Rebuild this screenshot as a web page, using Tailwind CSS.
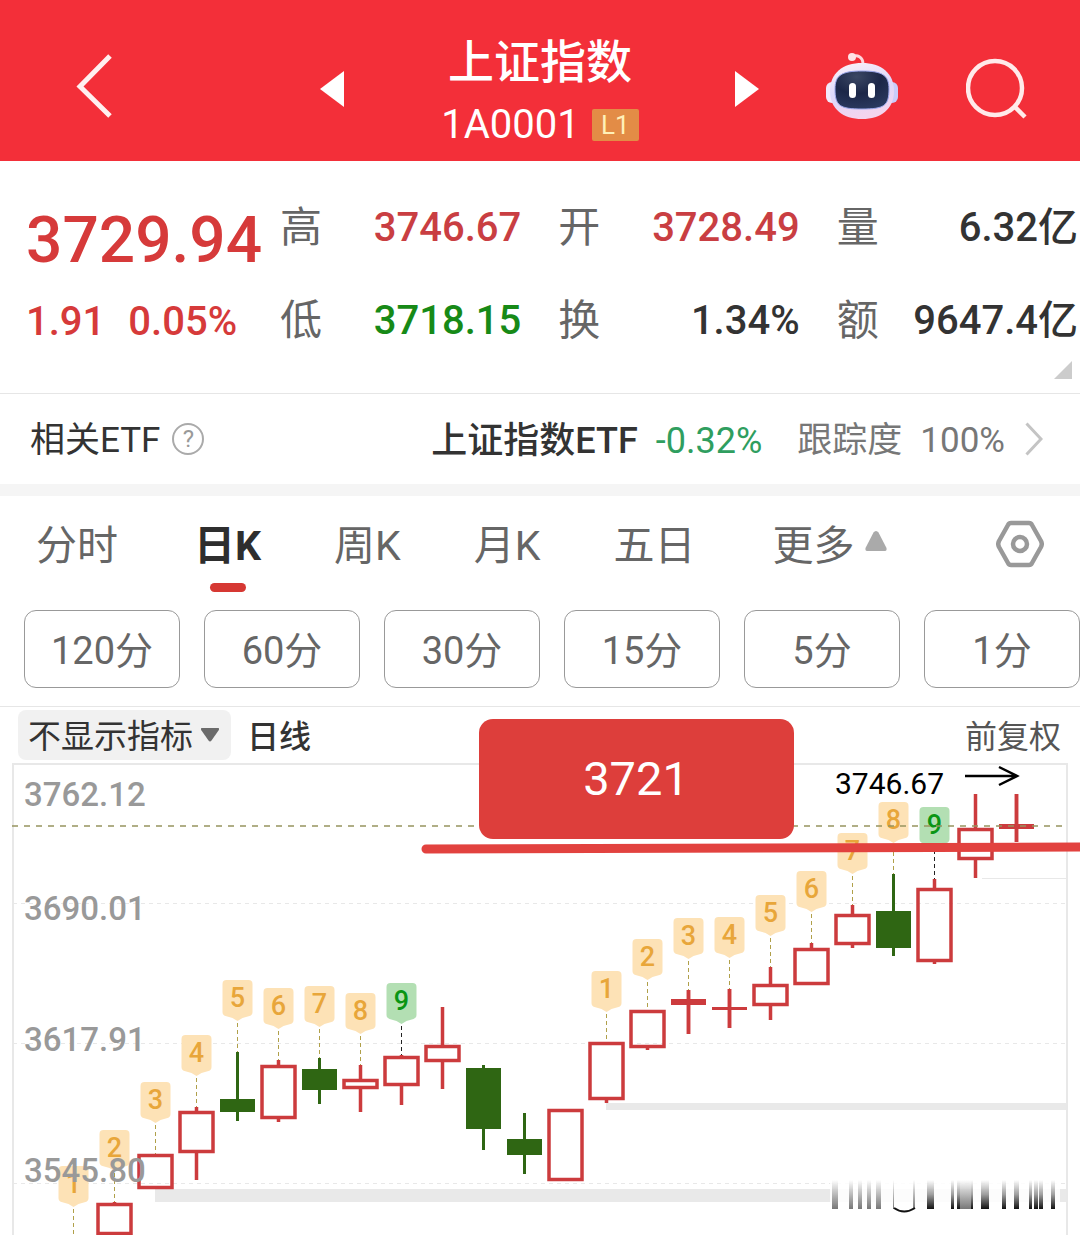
<!DOCTYPE html>
<html lang="zh-CN">
<head>
<meta charset="utf-8">
<meta name="viewport" content="width=device-width, initial-scale=1">
<title>上证指数 1A0001</title>
<script src="https://cdn.jsdelivr.net/npm/@tailwindcss/browser@4"></script>
</head>
<body class="bg-white font-[Roboto,'Noto_Sans_CJK_SC',sans-serif] text-[#333] overflow-x-hidden">

<header class="grid grid-cols-[1fr_auto_1fr] bg-[#f32f39] text-white h-[161px]">
  <div class="flex items-start justify-between pl-[76px] pr-[97px]">
    <button type="button" aria-label="返回" class="mt-[54px]">
      <svg class="block w-[37px] h-[64px]" viewBox="0 0 37 64" fill="none" stroke="#fff0f0" stroke-width="5"><path d="M34 2 4 32.500 34 62"/></svg>
    </button>
    <button type="button" aria-label="上一个" class="mt-[71px]">
      <svg class="block w-[24px] h-[36px]" viewBox="0 0 24 36" fill="#fff"><path d="M0 18 24 0V36Z"/></svg>
    </button>
  </div>
  <div class="flex flex-col items-center pt-[34px]">
    <h1 class="text-[46px] leading-[56px] font-medium">上证指数</h1>
    <div class="flex items-center gap-3 pt-[11px]">
      <span class="text-[40px] leading-[48px]">1A0001</span>
      <span class="bg-[#e38c46] text-[#fff0b8] text-[26px] leading-[32px] w-[47px] text-center rounded-xs">L1</span>
    </div>
  </div>
  <div class="flex items-start justify-between pl-[96px] pr-[53px]">
    <button type="button" aria-label="下一个" class="mt-[71px]">
      <svg class="block w-[24px] h-[36px]" viewBox="0 0 24 36" fill="#fff"><path d="M24 18 0 0V36Z"/></svg>
    </button>
    <button type="button" aria-label="智能助手" class="mt-[52px]">
      <svg class="block w-[72px] h-[68px]" viewBox="0 0 72 68">
        <defs>
          <linearGradient id="shell" x1="0" y1="0" x2=".3" y2="1"><stop offset="0" stop-color="#fff3f8"/><stop offset=".55" stop-color="#dcd8fb"/><stop offset="1" stop-color="#f3d4ee"/></linearGradient>
          <radialGradient id="visor" cx=".4" cy=".15" r=".9"><stop offset="0" stop-color="#3b4763"/><stop offset=".5" stop-color="#1c2748"/><stop offset="1" stop-color="#2b3a60"/></radialGradient>
        </defs>
        <path d="M26 5C31 2 37 5 37 12" fill="none" stroke="#ffd6dc" stroke-width="3"/>
        <circle cx="26" cy="5" r="4" fill="#ffe3e6"/>
        <rect x="0" y="30" width="14" height="21" rx="6" fill="#f2e9fb"/>
        <rect x="58" y="30" width="14" height="21" rx="6" fill="#c9ccfa"/>
        <path d="M36 11C55 11 68 21 68 39C68 57 55 67 36 67S4 57 4 39C4 21 17 11 36 11Z" fill="url(#shell)"/>
        <path d="M36 19C56 19 63 23 63 37C63 54 58 57 36 57S9 54 9 37C9 23 16 19 36 19Z" fill="url(#visor)" stroke="#9aa6ea" stroke-width="1"/>
        <rect x="23" y="31" width="7" height="15" rx="3.500" fill="#fff"/>
        <rect x="42" y="31" width="7" height="15" rx="3.500" fill="#fff"/>
      </svg>
    </button>
    <button type="button" aria-label="搜索" class="mt-[58px]">
      <svg class="block w-[61px] h-[61px]" viewBox="0 0 61 61" fill="none" stroke="#ffeaea" stroke-width="4.500"><circle cx="29" cy="30" r="27"/><path d="M48 48 59 59"/></svg>
    </button>
  </div>
</header>

<main>
  <section class="relative flex pt-5 pb-[26px] border-b border-[#e6e6e6]">
    <div class="w-[280px] shrink-0 pl-[26px] text-[#d63a3a] font-medium">
      <div class="text-[64px] leading-[90px] pt-[15px]">3729.94</div>
      <div class="flex gap-[23px] text-[40px] leading-[72px]"><span>1.91</span><span>0.05%</span></div>
    </div>
    <dl class="grid grow grid-cols-3 gap-x-[37px] pr-[2px] text-[42px] leading-[93px] text-[#666]">
      <div class="flex justify-between"><dt>高</dt><dd class="text-[40px] font-medium text-[#c93e42]">3746.67</dd></div>
      <div class="flex justify-between"><dt>开</dt><dd class="text-[40px] font-medium text-[#c93e42]">3728.49</dd></div>
      <div class="flex justify-between"><dt>量</dt><dd class="text-[40px] font-medium text-[#333]">6.32亿</dd></div>
      <div class="flex justify-between"><dt>低</dt><dd class="text-[40px] font-medium text-[#178a17]">3718.15</dd></div>
      <div class="flex justify-between"><dt>换</dt><dd class="text-[40px] font-medium text-[#333]">1.34%</dd></div>
      <div class="flex justify-between"><dt>额</dt><dd class="text-[40px] font-medium text-[#333]">9647.4亿</dd></div>
    </dl>
    <svg class="absolute right-2 bottom-[14px] w-[18px] h-[18px]" viewBox="0 0 18 18" fill="#ccc"><path d="M18 0V18H0Z"/></svg>
  </section>

  <section class="flex items-center justify-between h-[90px] pl-[30px] pr-[37px] text-[35px] leading-[48px] pt-1">
    <div class="flex items-center gap-3">
      <span>相关ETF</span>
      <button type="button" aria-label="说明" class="w-8 h-8 mb-1 rounded-full border-2 border-[#aaa] text-[#999] text-[24px] leading-[28px]">?</button>
    </div>
    <a href="#etf" class="flex items-center">
      <span class="text-[36px] font-medium">上证指数ETF</span>
      <span class="text-[36px] text-[#2f9e5f] ml-[18px]">-0.32%</span>
      <span class="text-[#777] ml-[35px]">跟踪度</span>
      <span class="text-[#777] ml-[18px]">100%</span>
      <svg class="w-[18px] h-[34px] ml-5 mb-1" viewBox="0 0 18 34" fill="none" stroke="#c4c4c4" stroke-width="3"><path d="M1.500 1.500 16 17 1.500 32.500"/></svg>
    </a>
  </section>
  <div class="h-3 bg-[#f5f5f5]"></div>

  <nav class="flex items-start h-[114px] pl-[36px] pr-[36px] pt-[22px] text-[41px] leading-[56px] text-[#666]">
    <div class="flex items-start gap-[73px]">
      <button type="button">分时</button>
      <button type="button" class="flex flex-col items-center ml-[3px] font-bold text-[#2e2e2e]">日K<span class="block w-9 h-[9px] mt-[9px] rounded-full bg-[#d63833]"></span></button>
      <button type="button">周K</button>
      <button type="button">月K</button>
      <button type="button">五日</button>
      <button type="button" class="flex items-center gap-[10px] ml-1">更多<svg class="w-[22px] h-[20px] mb-[10px]" viewBox="0 0 22 20" fill="#aaa"><path d="M11 0Q12.500 0 13.500 1.500L21.500 17Q22 20 20 20H2Q0 20 .500 17L8.500 1.500Q9.500 0 11 0Z"/></svg></button>
    </div>
    <button type="button" aria-label="设置" class="ml-auto mt-[2px]">
      <svg class="block w-[48px] h-[48px]" viewBox="0 0 48 48" fill="none" stroke="#999" stroke-width="4.500" stroke-linejoin="round"><path d="M15 3H33Q35 3 36 5L45 21Q46.500 24 45 27L36 43Q35 45 33 45H15Q13 45 12 43L3 27Q1.500 24 3 21L12 5Q13 3 15 3Z"/><circle cx="24" cy="24" r="7"/></svg>
    </button>
  </nav>

  <div class="grid grid-cols-6 gap-6 pl-6 pb-[18px] border-b border-[#e6e6e6] text-[38px] leading-[72px] text-[#666]">
    <button type="button" class="border border-[#999] rounded-xl pt-1">120分</button>
    <button type="button" class="border border-[#999] rounded-xl pt-1">60分</button>
    <button type="button" class="border border-[#999] rounded-xl pt-1">30分</button>
    <button type="button" class="border border-[#999] rounded-xl pt-1">15分</button>
    <button type="button" class="border border-[#999] rounded-xl pt-1">5分</button>
    <button type="button" class="border border-[#999] rounded-xl pt-1">1分</button>
  </div>

  <div class="flex items-center pl-[18px] pr-[19px] pt-[3px] pb-[3px] text-[32px] leading-[46px]">
    <div class="relative">
      <select aria-label="指标" class="block appearance-none w-[213px] h-[50px] pt-1 pl-[10px] rounded-lg bg-[#f1f1f1] text-[33px] leading-[46px] text-[#333]"><option>不显示指标</option></select>
      <svg class="absolute right-3 top-[18px] w-[18px] h-[14px] pointer-events-none" viewBox="0 0 18 14" fill="#6b6b6b"><path d="M1 0H17Q19 0 17.500 2.500L10.500 12.500Q9 14.500 7.500 12.500L.500 2.500Q-1 0 1 0Z"/></svg>
    </div>
    <span class="ml-4 pt-1 font-medium">日线</span>
    <span class="ml-auto pt-1 text-[#555]">前复权</span>
  </div>

  <svg id="chart" role="img" aria-label="日线图" class="block w-full h-auto overflow-visible font-[Roboto,sans-serif]" viewBox="0 763 1080 472">
    <defs>
      <linearGradient id="fade" x1="0" y1="0" x2="0" y2="1"><stop offset="0" stop-color="#111" stop-opacity="0"/><stop offset=".5" stop-color="#111" stop-opacity=".4"/><stop offset="1" stop-color="#111"/></linearGradient>
      <linearGradient id="soft" x1="0" y1="0" x2="0" y2="1"><stop offset="0" stop-color="#555" stop-opacity="0"/><stop offset="1" stop-color="#555" stop-opacity=".8"/></linearGradient>
    </defs>
    <g fill="#e9e9e9">
      <rect x="606" y="1103" width="462" height="7"/>
      <rect x="155" y="1189" width="913" height="13"/>
    </g>
    <g fill="none" stroke="#e8e8e8">
      <path d="M13 1235V764H1067V1235" stroke-width="2"/>
      <path d="M982 878.500H1067"/>
      <path d="M13 903.500H1067M13 1043.500H1067M13 1183.500H1067" stroke-dasharray="4 4"/>
    </g>
    <g id="plot"></g>
    <path d="M12 826H1066" stroke="#96945f" stroke-width="1.500" stroke-dasharray="6 6"/>
    <g fill="#999" font-size="33" font-weight="500">
      <text x="24" y="806">3762.12</text>
      <text x="24" y="920">3690.01</text>
      <text x="24" y="1051">3617.91</text>
      <text x="24" y="1182">3545.80</text>
    </g>
    <text x="835" y="794" font-size="30" fill="#000">3746.67</text>
    <path d="M965 776H1016M999 767 1017 776 999 785" fill="none" stroke="#000" stroke-width="2.500"/>
    <rect x="830" y="1180" width="230" height="30" fill="#fff" opacity=".85"/>
    <g id="smear"></g>
    <path d="M894 1208Q904 1215 915 1208" fill="none" stroke="#111" stroke-width="2"/>
    <path d="M426 849 1084 847" stroke="#e2423f" stroke-width="9" stroke-linecap="round"/>
    <rect x="479" y="719" width="315" height="120" rx="14" fill="#dd3e3b"/>
    <text x="636" y="795" font-size="47" fill="#fff" text-anchor="middle">3721</text>
  </svg>
</main>

<script>
  // Candle: [body top, body bottom, wick top, wick bottom, kind]; u = hollow, d = filled green, s = filled red
  const candles = [
    null,
    [1203, 1235, 1202, 1235, 'u'], [1154, 1189, 1154, 1189, 'u'], [1111, 1153, 1107, 1180, 'u'],
    [1099, 1112, 1052, 1121, 'd'], [1065, 1119, 1060, 1122, 'u'], [1069, 1090, 1058, 1104, 'd'],
    [1079, 1089, 1065, 1112, 'u'], [1056, 1086, 1055, 1105, 'u'], [1045, 1062, 1007, 1089, 'u'],
    [1068, 1129, 1065, 1150, 'd'], [1139, 1155, 1113, 1174, 'd'], [1109, 1181, 1109, 1181, 'u'],
    [1042, 1100, 1042, 1103, 'u'], [1010, 1048, 1010, 1050, 'u'], [999, 1005, 990, 1034, 's'],
    [1007, 1010, 989, 1028, 's'], [984, 1006, 967, 1020, 'u'], [948, 985, 943, 985, 'u'],
    [914, 945, 905, 948, 'u'], [911, 948, 874, 956, 'd'], [888, 962, 879, 964, 'u'],
    [828, 860, 794, 878, 'u'], [824, 829, 794, 842, 's']
  ];
  // Count marks: candle index -> [number, top of the tag]
  const marks = {0: [1, 1166], 1: [2, 1130], 2: [3, 1082], 3: [4, 1035], 4: [5, 980], 5: [6, 988], 6: [7, 986], 7: [8, 993], 8: [9, 983],
    13: [1, 971], 14: [2, 939], 15: [3, 918], 16: [4, 917], 17: [5, 895], 18: [6, 871], 19: [7, 833], 20: [8, 802], 21: [9, 807]};
  const red = '#cc3b3d', green = '#2f6613';
  let out = '';
  candles.forEach((c, i) => {
    const x = 73.5 + 41 * i;
    const m = marks[i];
    if (m) {
      const nine = m[0] === 9, t = m[1];
      out += `<path d="M${x} ${t + 43}V${c ? c[2] : 1235}" stroke="${nine ? '#222' : '#b0a04a'}" stroke-dasharray="4 3"/>`;
      out += `<path d="M${x - 11} ${t}h22q4 0 4 4v28q0 3-3 4l-7 2-5 3-5-3-7-2q-3-1-3-4v-28q0-4 4-4z" fill="${nine ? '#b3dfb3' : '#fde2b6'}"/>`;
      out += `<text x="${x}" y="${t + 27}" font-size="27" font-weight="500" text-anchor="middle" fill="${nine ? '#0a9514' : '#e8a63a'}">${m[0]}</text>`;
    }
    if (!c) return;
    const [a, b, w1, w2, k] = c, col = k === 'd' ? green : red;
    out += `<path d="M${x} ${w1}V${a + 1}M${x} ${b - 1}V${w2}" stroke="${col}" stroke-width="${k === 'd' ? 3 : 3.5}"/>`;
    out += k === 'u'
      ? `<rect x="${x - 16.5}" y="${a + 1.5}" width="33" height="${b - a - 3}" fill="${b - a < 12 ? '#fff' : 'none'}" stroke="${col}" stroke-width="3.5"/>`
      : `<rect x="${x - 17.5}" y="${a}" width="35" height="${b - a}" fill="${col}"/>`;
    if (k === 's') out += `<path d="M${x} ${w1}V${w2}" stroke="${col}" stroke-width="3.5"/>`;
  });
  document.getElementById('plot').innerHTML = out;

  const bars = [[832, 6, 0], [849, 4, 0], [858, 4, 0], [867, 4, 0], [876, 5, 0], [893, 1, 0], [913, 2, 0], [927, 7, 1], [951, 3, 1], [957, 3, 1],
    [960, 11, 0], [971, 2, 1], [981, 8, 1], [1002, 4, 1], [1014, 5, 1], [1029, 3, 1], [1034, 4, 1], [1039, 4, 1], [1051, 4, 1]];
  document.getElementById('smear').innerHTML = bars.map(([x, w, k]) =>
    `<rect x="${x}" y="1180" width="${w}" height="29" fill="url(#${k ? 'fade' : 'soft'})"/>`).join('');
</script>
</body>
</html>
